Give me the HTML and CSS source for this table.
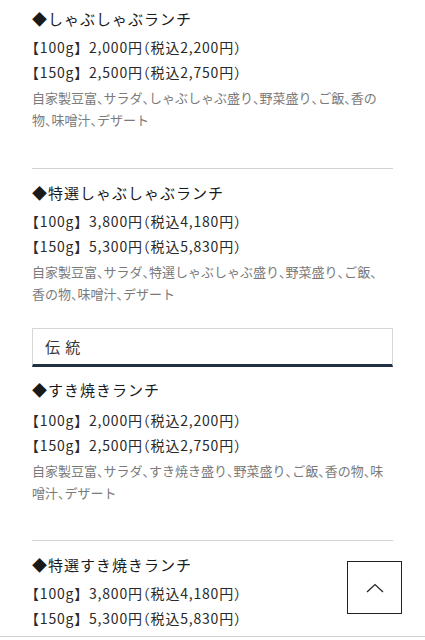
FILE: index.html
```html
<!DOCTYPE html>
<html lang="ja">
<head>
<meta charset="utf-8">
<title>ランチ</title>
<link rel="stylesheet" href="styles.css">
</head>
<body>
<main class="menu">
  <section class="item item-first">
    <h3 class="item-title">◆しゃぶしゃぶランチ</h3>
    <ul class="prices">
      <li><span class="h">【</span>100g】2,000円<span class="h">（</span>税込2,200円<span class="h">）</span></li>
      <li><span class="h">【</span>150g】2,500円<span class="h">（</span>税込2,750円<span class="h">）</span></li>
    </ul>
    <p class="desc">自家製豆富<span class="h">、</span>サラダ<span class="h">、</span>しゃぶしゃぶ盛り<span class="h">、</span>野菜盛り<span class="h">、</span>ご飯<span class="h">、</span>香の物<span class="h">、</span>味噌汁<span class="h">、</span>デザート</p>
  </section>
  <section class="item item-end">
    <h3 class="item-title">◆特選しゃぶしゃぶランチ</h3>
    <ul class="prices">
      <li><span class="h">【</span>100g】3,800円<span class="h">（</span>税込4,180円<span class="h">）</span></li>
      <li><span class="h">【</span>150g】5,300円<span class="h">（</span>税込5,830円<span class="h">）</span></li>
    </ul>
    <p class="desc">自家製豆富<span class="h">、</span>サラダ<span class="h">、</span>特選しゃぶしゃぶ盛り<span class="h">、</span>野菜盛り<span class="h">、</span>ご飯<span class="h">、</span><br>香の物<span class="h">、</span>味噌汁<span class="h">、</span>デザート</p>
  </section>

  <h2 class="group-heading">伝統</h2>

  <section class="item item-after-heading">
    <h3 class="item-title">◆すき焼きランチ</h3>
    <ul class="prices">
      <li><span class="h">【</span>100g】2,000円<span class="h">（</span>税込2,200円<span class="h">）</span></li>
      <li><span class="h">【</span>150g】2,500円<span class="h">（</span>税込2,750円<span class="h">）</span></li>
    </ul>
    <p class="desc">自家製豆富<span class="h">、</span>サラダ<span class="h">、</span>すき焼き盛り<span class="h">、</span>野菜盛り<span class="h">、</span>ご飯<span class="h">、</span>香の物<span class="h">、</span>味噌汁<span class="h">、</span>デザート</p>
  </section>
  <section class="item">
    <h3 class="item-title">◆特選すき焼きランチ</h3>
    <ul class="prices">
      <li><span class="h">【</span>100g】3,800円<span class="h">（</span>税込4,180円<span class="h">）</span></li>
      <li><span class="h">【</span>150g】5,300円<span class="h">（</span>税込5,830円<span class="h">）</span></li>
    </ul>
    <p class="desc">自家製豆富<span class="h">、</span>サラダ<span class="h">、</span>特選すき焼き盛り<span class="h">、</span>野菜盛り<span class="h">、</span>ご飯<span class="h">、</span>香の物<span class="h">、</span>味噌汁<span class="h">、</span>デザート</p>
  </section>
</main>

<a class="to-top" href="#" aria-label="ページトップへ">
  <svg width="18" height="10" viewBox="0 0 18 10" aria-hidden="true"><path d="M1 9 L9 1.5 L17 9" fill="none" stroke="#222" stroke-width="1.2"/></svg>
</a>
<div class="bottom-bar"></div>
</body>
</html>
```
FILE: styles.css
```css
html, body {
  margin: 0;
  padding: 0;
  background: #fff;
}
body {
  font-family: "Noto Sans CJK JP", "Noto Sans", sans-serif;
  color: #333;
}
.menu {
  margin: 0 32px;
  display: flex;
  flex-direction: column;
}
.item {
  padding: 12px 0 37px;
  border-top: 1px solid #d2d2d2;
}
.item-first {
  border-top: none;
  padding-top: 7px;
}
.item-end {
  padding-bottom: 23px;
}
.item-after-heading {
  border-top: none;
  padding-top: 11px;
  padding-bottom: 36px;
}
.item-title {
  margin: 0;
  font-size: 15px;
  font-weight: 400;
  line-height: 24px;
  letter-spacing: 1px;
  color: #1a1a1a;
}
.prices {
  list-style: none;
  margin: 4px 0 0;
  padding: 0;
  font-size: 14px;
  line-height: 25px;
  letter-spacing: 0.8px;
  color: #2a2a2a;
}
.item-after-heading .prices {
  margin-top: 6px;
}
.desc {
  margin: 2px 0 0;
  font-size: 13px;
  line-height: 22px;
  color: #7a7a7a;
}
.h {
  font-feature-settings: "halt";
}
.group-heading {
  margin: 0;
  height: 35px;
  border: 1px solid #d6d6d6;
  border-bottom: 3px solid #1f3042;
  padding: 0 12px;
  display: flex;
  align-items: center;
  font-size: 15px;
  font-weight: 400;
  letter-spacing: 0.35em;
  color: #333;
}
.to-top {
  position: fixed;
  right: 23px;
  bottom: 26px;
  width: 53px;
  height: 51px;
  border: 1.5px solid #222;
  background: #fff;
  display: flex;
  align-items: center;
  justify-content: center;
}
.bottom-bar {
  position: fixed;
  left: 0;
  right: 0;
  bottom: 0;
  height: 3px;
  background: #fff;
  border-top: 1px solid #cfcfcf;
}
```
